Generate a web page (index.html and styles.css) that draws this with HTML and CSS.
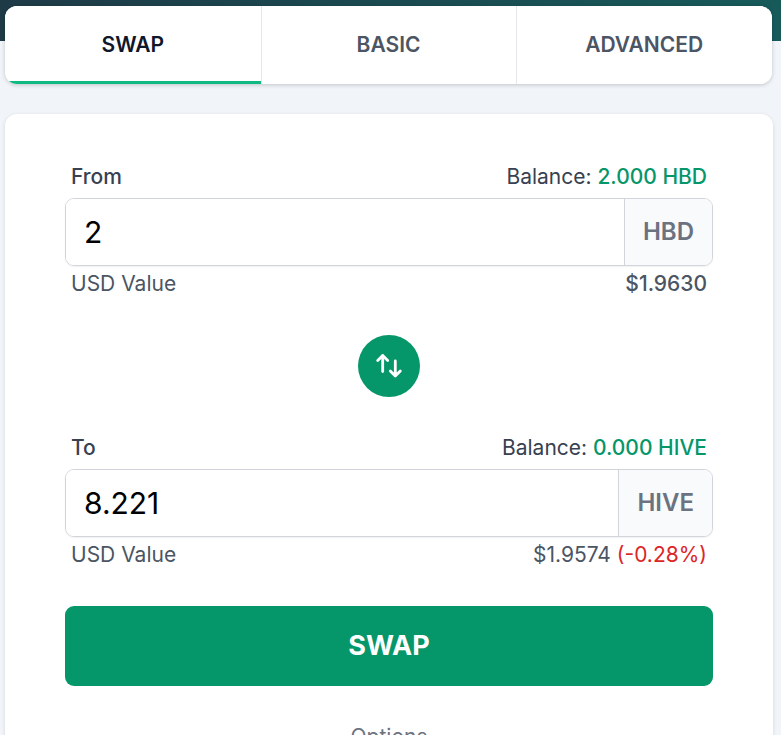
FILE: index.html
```html
<!DOCTYPE html>
<html lang="en">
<head>
    <meta charset="UTF-8">
    <meta name="viewport" content="width=device-width, initial-scale=1.0">
    <title>Swap</title>
    <link rel="stylesheet" href="styles.css">
</head>
<body>
    <div class="page">
        <nav class="tabs">
            <button type="button" class="tab active">SWAP</button>
            <button type="button" class="tab">BASIC</button>
            <button type="button" class="tab">ADVANCED</button>
        </nav>
        <form class="card">
            <div class="field">
                <div class="row">
                    <label class="name" for="from">From</label>
                    <span>Balance: <a class="balance" href="#">2.000 HBD</a></span>
                </div>
                <div class="amount">
                    <input id="from" type="text" value="2">
                    <span class="unit">HBD</span>
                </div>
                <div class="row usd">
                    <span>USD Value</span>
                    <span class="strong">$1.9630</span>
                </div>
            </div>
            <button type="button" class="flip" aria-label="Switch direction">
                <svg viewBox="0 0 30 30" width="30" height="30">
                    <path d="M3.700 9.500l5-5 5 5M8.700 4.500v16M16.300 20l5 5 5-5M21.300 25V10"/>
                </svg>
            </button>
            <div class="field">
                <div class="row">
                    <label class="name" for="to">To</label>
                    <span>Balance: <a class="balance" href="#">0.000 HIVE</a></span>
                </div>
                <div class="amount">
                    <input id="to" type="text" value="8.221">
                    <span class="unit">HIVE</span>
                </div>
                <div class="row usd">
                    <span>USD Value</span>
                    <span>$1.9574 <span class="loss">(-0.28%)</span></span>
                </div>
            </div>
            <button type="button" class="submit">SWAP</button>
            <button type="button" class="options">Options</button>
        </form>
    </div>
</body>
</html>
```
FILE: styles.css
```css
* {
    box-sizing: border-box;
}
body {
    margin: 0;
    background: linear-gradient(to right, #1e3a47, #175a5a) no-repeat top / 100% 41px, #f1f5f9;
    font-family: Inter, sans-serif;
    font-size: 21px;
    line-height: 30px;
    color: #374151;
}
button, input {
    font: inherit;
    border: 0;
    margin: 0;
}
button {
    cursor: pointer;
}
.page {
    padding: 6px 8px 0 5px;
}
.tabs {
    display: flex;
    margin-right: 1px;
    border-radius: 12px;
    overflow: hidden;
    background: #fff;
    box-shadow: 0 1px 4px rgba(0, 0, 0, .2);
}
.tab {
    flex: 1;
    height: 78px;
    padding: 0;
    background: #fff;
    font-weight: 600;
    color: #4b5563;
}
.tab + .tab {
    box-shadow: inset 1px 0 #e5e7eb;
}
.tab.active {
    box-shadow: inset 0 -3px #10b981;
    color: #0f172a;
}
.card {
    display: flex;
    flex-direction: column;
    margin-top: 30px;
    padding: 48px 60px 24px;
    border-radius: 12px;
    background: #fff;
    box-shadow: 0 1px 4px rgba(0, 0, 0, .12);
}
.row {
    display: flex;
    justify-content: space-between;
    padding: 0 6px;
}
.name, .balance, .strong {
    font-weight: 500;
}
.balance {
    color: #059669;
    text-decoration: none;
}
.usd {
    margin-top: 3px;
    color: #4b5563;
}
.loss {
    color: #dc2626;
}
.amount {
    display: flex;
    height: 68px;
    margin-top: 6px;
    border: 1px solid #d1d5db;
    border-radius: 9px;
    overflow: hidden;
    box-shadow: 0 1px 2px rgba(0, 0, 0, .06);
}
.amount input {
    flex: 1;
    min-width: 0;
    padding: 0 18px;
    font-size: 30px;
    color: #000;
    outline: 0;
}
.unit {
    display: flex;
    align-items: center;
    padding: 0 18px;
    border-left: 1px solid #d1d5db;
    background: #f9fafb;
    font-size: 24px;
    font-weight: 600;
    color: #6b7280;
}
.flip {
    display: flex;
    align-items: center;
    justify-content: center;
    align-self: center;
    width: 62px;
    height: 62px;
    margin: 36px 0;
    padding: 0;
    border-radius: 50%;
    background: #059669;
}
.flip svg {
    fill: none;
    stroke: #fff;
    stroke-width: 2.8;
    stroke-linecap: round;
    stroke-linejoin: round;
}
.submit {
    height: 80px;
    margin-top: 36px;
    border-radius: 9px;
    background: #059669;
    font-size: 27px;
    font-weight: 700;
    color: #fff;
}
.options {
    align-self: center;
    margin-top: 36px;
    padding: 0;
    background: none;
    color: #6b7280;
}
```
